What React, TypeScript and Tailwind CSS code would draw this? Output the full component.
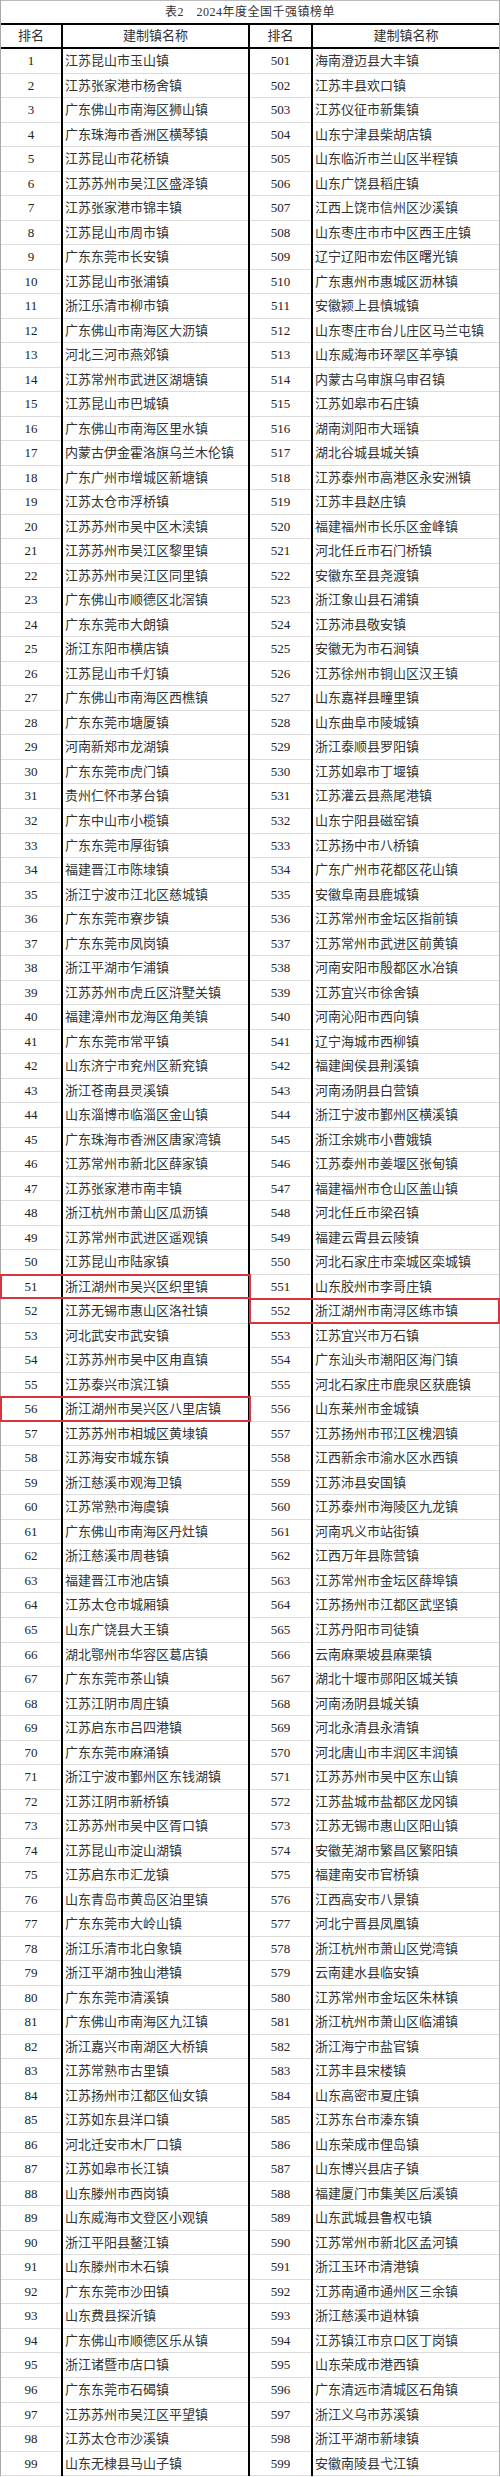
import React from "react";

// 表2 2024年度全国千强镇榜单（1–99 / 501–599）
const left: string[] = [
  "江苏昆山市玉山镇", "江苏张家港市杨舍镇", "广东佛山市南海区狮山镇", "广东珠海市香洲区横琴镇", "江苏昆山市花桥镇",
  "江苏苏州市吴江区盛泽镇", "江苏张家港市锦丰镇", "江苏昆山市周市镇", "广东东莞市长安镇", "江苏昆山市张浦镇",
  "浙江乐清市柳市镇", "广东佛山市南海区大沥镇", "河北三河市燕郊镇", "江苏常州市武进区湖塘镇", "江苏昆山市巴城镇",
  "广东佛山市南海区里水镇", "内蒙古伊金霍洛旗乌兰木伦镇", "广东广州市增城区新塘镇", "江苏太仓市浮桥镇", "江苏苏州市吴中区木渎镇",
  "江苏苏州市吴江区黎里镇", "江苏苏州市吴江区同里镇", "广东佛山市顺德区北滘镇", "广东东莞市大朗镇", "浙江东阳市横店镇",
  "江苏昆山市千灯镇", "广东佛山市南海区西樵镇", "广东东莞市塘厦镇", "河南新郑市龙湖镇", "广东东莞市虎门镇",
  "贵州仁怀市茅台镇", "广东中山市小榄镇", "广东东莞市厚街镇", "福建晋江市陈埭镇", "浙江宁波市江北区慈城镇",
  "广东东莞市寮步镇", "广东东莞市凤岗镇", "浙江平湖市乍浦镇", "江苏苏州市虎丘区浒墅关镇", "福建漳州市龙海区角美镇",
  "广东东莞市常平镇", "山东济宁市兖州区新兖镇", "浙江苍南县灵溪镇", "山东淄博市临淄区金山镇", "广东珠海市香洲区唐家湾镇",
  "江苏常州市新北区薛家镇", "江苏张家港市南丰镇", "浙江杭州市萧山区瓜沥镇", "江苏常州市武进区遥观镇", "江苏昆山市陆家镇",
  "浙江湖州市吴兴区织里镇", "江苏无锡市惠山区洛社镇", "河北武安市武安镇", "江苏苏州市吴中区甪直镇", "江苏泰兴市滨江镇",
  "浙江湖州市吴兴区八里店镇", "江苏苏州市相城区黄埭镇", "江苏海安市城东镇", "浙江慈溪市观海卫镇", "江苏常熟市海虞镇",
  "广东佛山市南海区丹灶镇", "浙江慈溪市周巷镇", "福建晋江市池店镇", "江苏太仓市城厢镇", "山东广饶县大王镇",
  "湖北鄂州市华容区葛店镇", "广东东莞市茶山镇", "江苏江阴市周庄镇", "江苏启东市吕四港镇", "广东东莞市麻涌镇",
  "浙江宁波市鄞州区东钱湖镇", "江苏江阴市新桥镇", "江苏苏州市吴中区胥口镇", "江苏昆山市淀山湖镇", "江苏启东市汇龙镇",
  "山东青岛市黄岛区泊里镇", "广东东莞市大岭山镇", "浙江乐清市北白象镇", "浙江平湖市独山港镇", "广东东莞市清溪镇",
  "广东佛山市南海区九江镇", "浙江嘉兴市南湖区大桥镇", "江苏常熟市古里镇", "江苏扬州市江都区仙女镇", "江苏如东县洋口镇",
  "河北迁安市木厂口镇", "江苏如皋市长江镇", "山东滕州市西岗镇", "山东威海市文登区小观镇", "浙江平阳县鳌江镇",
  "山东滕州市木石镇", "广东东莞市沙田镇", "山东费县探沂镇", "广东佛山市顺德区乐从镇", "浙江诸暨市店口镇",
  "广东东莞市石碣镇", "江苏苏州市吴江区平望镇", "江苏太仓市沙溪镇", "山东无棣县马山子镇",
];

const right: string[] = [
  "海南澄迈县大丰镇", "江苏丰县欢口镇", "江苏仪征市新集镇", "山东宁津县柴胡店镇", "山东临沂市兰山区半程镇",
  "山东广饶县稻庄镇", "江西上饶市信州区沙溪镇", "山东枣庄市市中区西王庄镇", "辽宁辽阳市宏伟区曙光镇", "广东惠州市惠城区沥林镇",
  "安徽颍上县慎城镇", "山东枣庄市台儿庄区马兰屯镇", "山东威海市环翠区羊亭镇", "内蒙古乌审旗乌审召镇", "江苏如皋市石庄镇",
  "湖南浏阳市大瑶镇", "湖北谷城县城关镇", "江苏泰州市高港区永安洲镇", "江苏丰县赵庄镇", "福建福州市长乐区金峰镇",
  "河北任丘市石门桥镇", "安徽东至县尧渡镇", "浙江象山县石浦镇", "江苏沛县敬安镇", "安徽无为市石涧镇",
  "江苏徐州市铜山区汉王镇", "山东嘉祥县疃里镇", "山东曲阜市陵城镇", "浙江泰顺县罗阳镇", "江苏如皋市丁堰镇",
  "江苏灌云县燕尾港镇", "山东宁阳县磁窑镇", "江苏扬中市八桥镇", "广东广州市花都区花山镇", "安徽阜南县鹿城镇",
  "江苏常州市金坛区指前镇", "江苏常州市武进区前黄镇", "河南安阳市殷都区水冶镇", "江苏宜兴市徐舍镇", "河南沁阳市西向镇",
  "辽宁海城市西柳镇", "福建闽侯县荆溪镇", "河南汤阴县白营镇", "浙江宁波市鄞州区横溪镇", "浙江余姚市小曹娥镇",
  "江苏泰州市姜堰区张甸镇", "福建福州市仓山区盖山镇", "河北任丘市梁召镇", "福建云霄县云陵镇", "河北石家庄市栾城区栾城镇",
  "山东胶州市李哥庄镇", "浙江湖州市南浔区练市镇", "江苏宜兴市万石镇", "广东汕头市潮阳区海门镇", "河北石家庄市鹿泉区获鹿镇",
  "山东莱州市金城镇", "江苏扬州市邗江区槐泗镇", "江西新余市渝水区水西镇", "江苏沛县安国镇", "江苏泰州市海陵区九龙镇",
  "河南巩义市站街镇", "江西万年县陈营镇", "江苏常州市金坛区薛埠镇", "江苏扬州市江都区武坚镇", "江苏丹阳市司徒镇",
  "云南麻栗坡县麻栗镇", "湖北十堰市郧阳区城关镇", "河南汤阴县城关镇", "河北永清县永清镇", "河北唐山市丰润区丰润镇",
  "江苏苏州市吴中区东山镇", "江苏盐城市盐都区龙冈镇", "江苏无锡市惠山区阳山镇", "安徽芜湖市繁昌区繁阳镇", "福建南安市官桥镇",
  "江西高安市八景镇", "河北宁晋县凤凰镇", "浙江杭州市萧山区党湾镇", "云南建水县临安镇", "江苏常州市金坛区朱林镇",
  "浙江杭州市萧山区临浦镇", "浙江海宁市盐官镇", "江苏丰县宋楼镇", "山东高密市夏庄镇", "江苏东台市溱东镇",
  "山东荣成市俚岛镇", "山东博兴县店子镇", "福建厦门市集美区后溪镇", "山东武城县鲁权屯镇", "江苏常州市新北区孟河镇",
  "浙江玉环市清港镇", "江苏南通市通州区三余镇", "浙江慈溪市逍林镇", "江苏镇江市京口区丁岗镇", "山东荣成市港西镇",
  "广东清远市清城区石角镇", "浙江义乌市苏溪镇", "浙江平湖市新埭镇", "安徽南陵县弋江镇",
];

// 红框标注的行（湖州相关）
const markLeft = new Set([51, 56]);
const markRight = new Set([552]);

const font = "font-['Liberation_Serif','Noto_Sans_CJK_SC',serif]";

export default function App() {
  return (
    <div className={`w-[500px] bg-white text-[#333] ${font} border-x border-[#aaa]`}>
      <div className="flex h-[25px] items-center justify-center border-t border-b-2 border-t-[#bbb] border-b-black text-[12px] tracking-[0.5px]">
        表2　2024年度全国千强镇榜单
      </div>

      <div className="grid h-[24px] grid-cols-[60px_185px_61px_1fr] gap-x-[2px] bg-black text-[13px]">
        <div className="flex items-center justify-center border-b-2 border-black bg-white">排名</div>
        <div className="flex items-center justify-center border-b-2 border-black bg-white">建制镇名称</div>
        <div className="flex items-center justify-center border-b-2 border-black bg-white">排名</div>
        <div className="flex items-center justify-center border-b-2 border-black bg-white">建制镇名称</div>
      </div>

      {left.map((name, i) => {
        const a = i + 1;
        const b = i + 501;
        return (
          <div
            key={a}
            className="relative grid h-[24.53px] grid-cols-[60px_185px_61px_1fr] gap-x-[2px] bg-black text-[13px]"
          >
            <div className="flex items-center justify-center border-b border-[#dcdcdc] bg-white text-[#222]">{a}</div>
            <div className="flex items-center whitespace-nowrap border-b border-[#dcdcdc] bg-white pl-[2px]">{name}</div>
            <div className="flex items-center justify-center border-b border-[#dcdcdc] bg-white text-[#222]">{b}</div>
            <div className="flex items-center whitespace-nowrap border-b border-[#dcdcdc] bg-white pl-[2px]">{right[i]}</div>
            {markLeft.has(a) && (
              <div className="pointer-events-none absolute -top-px bottom-0 -left-px w-[251px] border-2 border-[#d8343c]" />
            )}
            {markRight.has(b) && (
              <div className="pointer-events-none absolute -top-px bottom-0 left-[248px] -right-px border-2 border-[#d8343c]" />
            )}
          </div>
        );
      })}
    </div>
  );
}
